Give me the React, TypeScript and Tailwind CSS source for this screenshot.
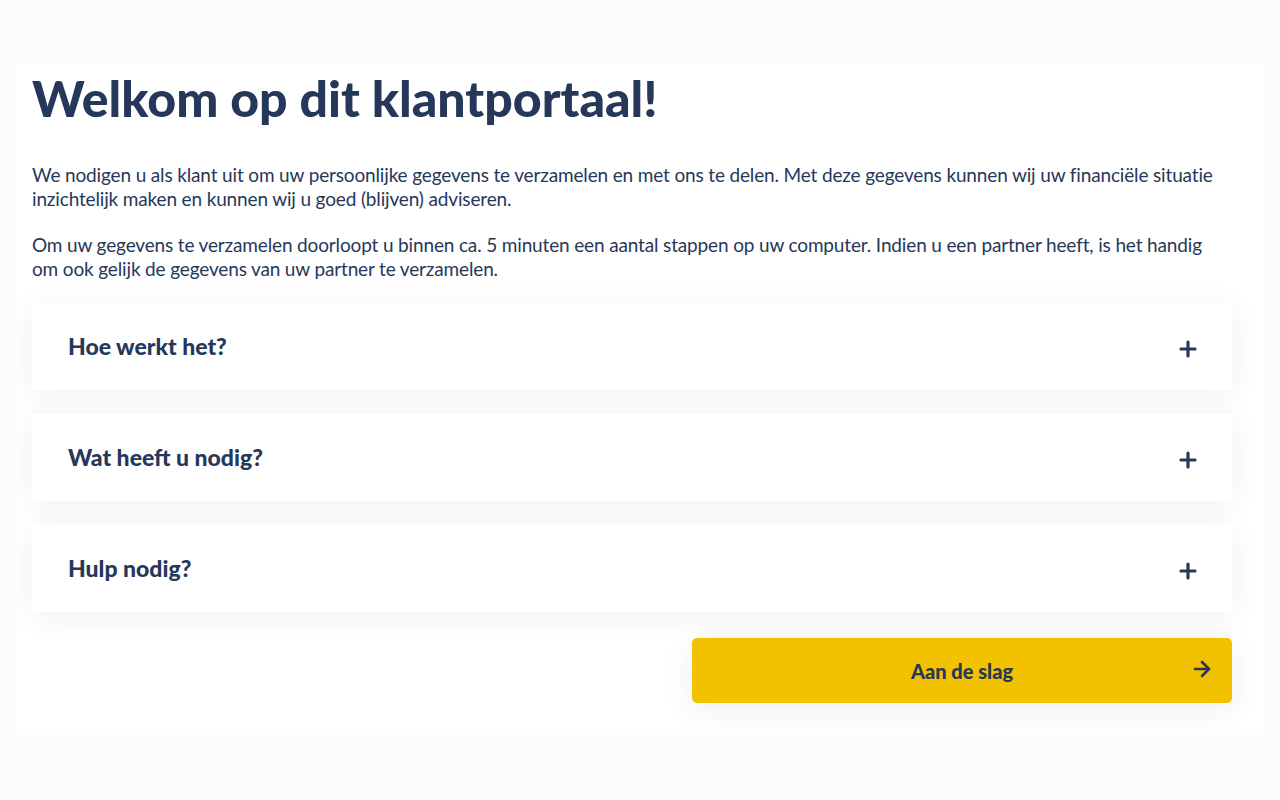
import { Plus, ArrowRight } from "lucide-react";

const ITEMS = ["Hoe werkt het?", "Wat heeft u nodig?", "Hulp nodig?"];

export default function App() {
  return (
    <div
      className="min-h-[800px] bg-[#fcfcfd] px-4 pt-16 text-[#26385a]"
      style={{ fontFamily: "Lato, 'Open Sans', sans-serif" }}
    >
      <div className="bg-white px-4 pb-8 pt-[2px]">
        <h1 className="text-[50px] font-black leading-[64px]">
          Welkom op dit klantportaal!
        </h1>

        <div className="mt-[33px] text-[19px] leading-[24px] tracking-[-0.15px]">
          <p>
            We nodigen u als klant uit om uw persoonlijke gegevens te verzamelen en met ons te delen. Met deze
            gegevens kunnen wij uw financiële situatie
            <br />
            inzichtelijk maken en kunnen wij u goed (blijven) adviseren.
          </p>
          <p className="mt-[22px]">
            Om uw gegevens te verzamelen doorloopt u binnen ca. 5 minuten een aantal stappen op uw computer.
            Indien u een partner heeft, is het handig
            <br />
            om ook gelijk de gegevens van uw partner te verzamelen.
          </p>
        </div>

        <div className="mt-[22px] flex w-[1200px] flex-col gap-6">
          {ITEMS.map((item) => (
            <div
              key={item}
              className="flex h-[87px] items-center justify-between bg-white pl-9 pr-[32px] shadow-[0_4px_30px_rgba(30,40,80,0.07)]"
            >
              <span className="text-[23px] font-black">{item}</span>
              <Plus className="mt-1 h-6 w-6" strokeWidth={3.2} />
            </div>
          ))}
        </div>

        <div className="mt-[26px] flex w-[1200px] justify-end">
          <button className="relative flex h-[65px] w-[540px] items-center justify-center rounded-[5px] bg-[#f2c200] shadow-[0_6px_30px_rgba(30,40,80,0.08)]">
            <span className="text-[20px] font-black">Aan de slag</span>
            <ArrowRight className="absolute right-[18px] top-[19px] h-6 w-6" strokeWidth={2.6} />
          </button>
        </div>
      </div>
    </div>
  );
}
